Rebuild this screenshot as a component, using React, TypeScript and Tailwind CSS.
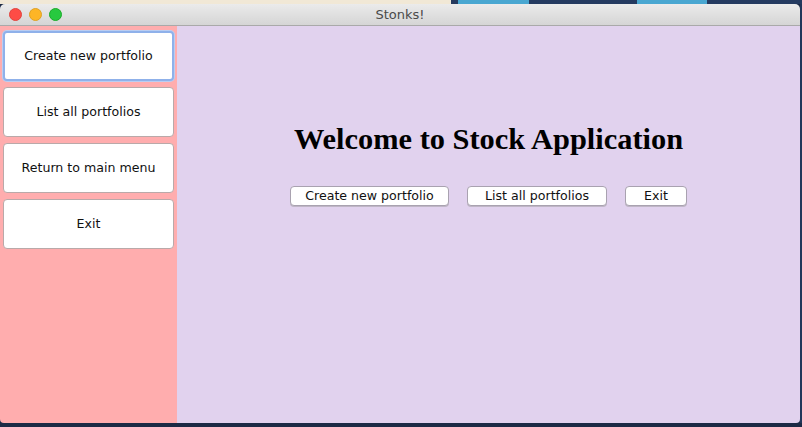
import React from "react";

const sans = { fontFamily: '"DejaVu Sans", "Liberation Sans", Arial, sans-serif' };

function SideButton({ label, focused }: { label: string; focused?: boolean }) {
  return (
    <div
      className={
        "h-[50px] rounded-[4px] bg-white flex items-center justify-center text-[12.6px] text-[#111] " +
        (focused
          ? "border-2 border-[#8fb1ea] shadow-[0_0_0_1px_#b9cdf2]"
          : "border border-[#b9a9a9]")
      }
      style={sans}
    >
      {label}
    </div>
  );
}

function SmallButton({ label, w }: { label: string; w: string }) {
  return (
    <div
      className={
        "h-[20px] rounded-[4px] bg-white border border-[#a9a2b0] flex items-center justify-center text-[12.6px] text-[#111] shadow-[0_1px_0_#bfb6c6] " +
        w
      }
      style={sans}
    >
      {label}
    </div>
  );
}

export default function App() {
  return (
    <div className="w-[802px] h-[427px] bg-[#1c2a45] flex flex-col overflow-hidden">
      <div className="h-[4px] flex shrink-0">
        <div className="w-[451px] bg-[#f1e8d6]" />
        <div className="w-[7px] bg-[#253a5e]" />
        <div className="w-[71px] bg-[#49a7d1]" />
        <div className="w-[108px] bg-[#243a60]" />
        <div className="w-[70px] bg-[#49a7d1]" />
        <div className="flex-1 bg-[#243a60]" />
      </div>
      <div className="flex h-[419px]">
        <div className="w-[800px] h-full flex flex-col rounded-t-[5px] rounded-b-[4px] overflow-hidden">
          <div className="h-[22px] shrink-0 bg-gradient-to-b from-[#ebebeb] to-[#d5d5d5] border-b border-[#a9a9a9] relative flex items-center justify-center">
            <div className="absolute left-[9px] top-[4px] flex gap-[7px]">
              <div className="w-[13px] h-[13px] rounded-full bg-[#fe4c46] border border-[#e0443e]" />
              <div className="w-[13px] h-[13px] rounded-full bg-[#fdb526] border border-[#dea123]" />
              <div className="w-[13px] h-[13px] rounded-full bg-[#27c93f] border border-[#1aab29]" />
            </div>
            <span className="text-[13px] text-[#4a4a4a] mt-[1px]" style={sans}>
              Stonks!
            </span>
          </div>
          <div className="flex flex-1 min-h-0">
            <div className="w-[177px] bg-[#ffadae] flex flex-col gap-[6px] pl-[3px] pr-[3px] pt-[5px]">
              <SideButton label="Create new portfolio" focused />
              <SideButton label="List all portfolios" />
              <SideButton label="Return to main menu" />
              <SideButton label="Exit" />
            </div>
            <div className="flex-1 bg-[#e1d2ee] flex flex-col items-center pt-[95px]">
              <h1
                className="text-[30.4px] font-bold text-black leading-[36px]"
                style={{ fontFamily: '"Liberation Serif", "Times New Roman", serif' }}
              >
                Welcome to Stock Application
              </h1>
              <div className="flex gap-[18px] mt-[29px]">
                <SmallButton label="Create new portfolio" w="w-[159px]" />
                <SmallButton label="List all portfolios" w="w-[140px]" />
                <SmallButton label="Exit" w="w-[62px]" />
              </div>
            </div>
          </div>
        </div>
        <div className="flex-1 bg-[#22365a]" />
      </div>
    </div>
  );
}
